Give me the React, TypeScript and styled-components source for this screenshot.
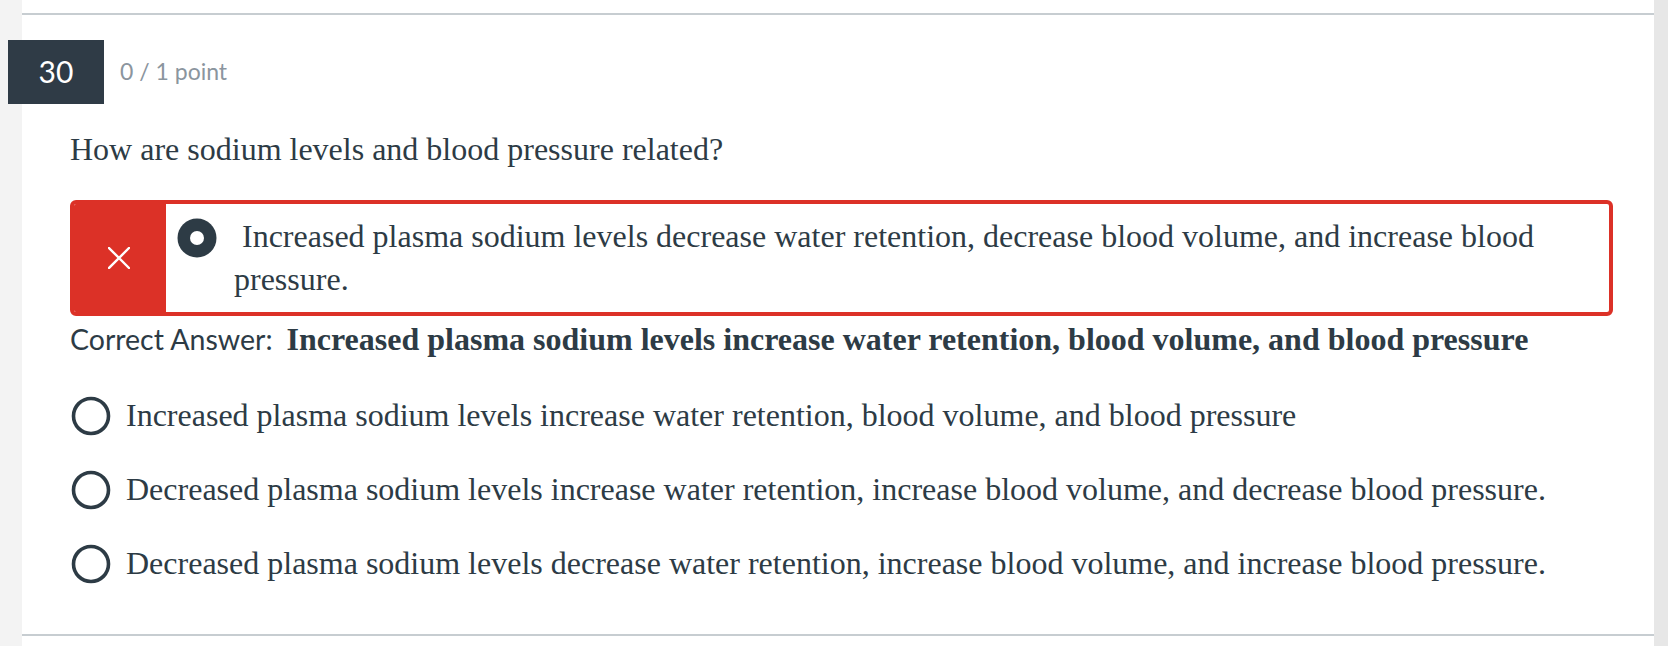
import React from 'react';
import styled, { createGlobalStyle } from 'styled-components';

const GlobalStyle = createGlobalStyle`
  html, body {
    margin: 0;
    padding: 0;
    background: #fff;
  }
  * {
    box-sizing: border-box;
  }
`;

const ink = '#2d3b45';
const red = '#dc3127';

const Page = styled.div`
  display: flex;
  min-height: 100vh;
`;

const Gutter = styled.div<{ $width: number; $bg: string }>`
  flex: 0 0 ${({ $width }) => $width}px;
  background: ${({ $bg }) => $bg};
`;

const Card = styled.div`
  flex: 1;
  background: #fff;
  padding-top: 13px;
  min-width: 0;
`;

const Rule = styled.div<{ $gap?: number }>`
  height: 2px;
  background: #c7cdd1;
  margin-top: ${({ $gap }) => $gap || 0}px;
`;

const Header = styled.div`
  display: flex;
  align-items: center;
  gap: 16px;
  margin: 25px 0 0 -14px;
  position: relative;
`;

const Badge = styled.div`
  width: 96px;
  height: 64px;
  background: #2f3b46;
  color: #fff;
  display: flex;
  align-items: center;
  justify-content: center;
  font-family: Lato, 'Liberation Sans', sans-serif;
  font-size: 30px;
  padding-bottom: 2px;
`;

const Points = styled.span`
  font-family: Lato, 'Liberation Sans', sans-serif;
  font-size: 23px;
  color: #8b959e;
  padding-bottom: 2px;
`;

const Body = styled.div`
  padding: 0 41px 0 48px;
  font-family: 'Liberation Serif', 'Times New Roman', serif;
  font-size: 32px;
  line-height: 43px;
  color: ${ink};
`;

const Question = styled.p`
  margin: 24px 0 29px;
`;

const WrongAnswer = styled.div`
  display: flex;
  border: 4px solid ${red};
  border-radius: 6px;
  overflow: hidden;
`;

const Marker = styled.div`
  flex: 0 0 92px;
  background: ${red};
  display: flex;
  align-items: center;
  justify-content: center;
  padding-right: 2px;
`;

const WrongBody = styled.div`
  flex: 1;
  display: flex;
  align-items: flex-start;
  gap: 17px;
  padding: 11px 12px 11px 11px;
`;

const RadioWrap = styled.span<{ $top?: number }>`
  flex: 0 0 auto;
  display: flex;
  margin-top: ${({ $top }) => $top || 0}px;
`;

const AnswerText = styled.span`
  white-space: pre-wrap;
`;

const CorrectLine = styled.div`
  margin-top: 2px;
  display: flex;
  align-items: baseline;
  gap: 14px;
`;

const CorrectLabel = styled.span`
  font-family: Lato, 'Liberation Sans', sans-serif;
  font-size: 28.5px;
`;

const CorrectText = styled.strong`
  font-weight: 700;
`;

const Options = styled.div`
  display: flex;
  flex-direction: column;
  gap: 31px;
  margin-top: 33px;
`;

const Option = styled.label`
  display: flex;
  align-items: center;
  gap: 15px;
  padding-left: 1px;
`;

const Radio: React.FC<{ checked?: boolean }> = ({ checked }) =>
  checked ? (
    <svg width="40" height="40" viewBox="0 0 40 40">
      <circle cx="20" cy="20" r="19.5" fill={ink} />
      <circle cx="20" cy="20" r="7" fill="#fff" />
    </svg>
  ) : (
    <svg width="40" height="40" viewBox="0 0 40 40">
      <circle cx="20" cy="20" r="17.5" fill="none" stroke={ink} strokeWidth="3.6" />
    </svg>
  );

const Cross = () => (
  <svg width="22" height="22" viewBox="0 0 22 22">
    <path d="M1 1 L21 21 M21 1 L1 21" stroke="#fff" strokeWidth="2.4" strokeLinecap="square" />
  </svg>
);

const options = [
  'Increased plasma sodium levels increase water retention, blood volume, and blood pressure',
  'Decreased plasma sodium levels increase water retention, increase blood volume, and decrease blood pressure.',
  'Decreased plasma sodium levels decrease water retention, increase blood volume, and increase blood pressure.',
];

const App: React.FC = () => {
  return (
    <>
      <GlobalStyle />
      <Page>
        <Gutter $width={22} $bg="#f3f3f3" />
        <Card>
          <Rule />
          <Header>
            <Badge>30</Badge>
            <Points>0 / 1 point</Points>
          </Header>
          <Body>
            <Question>How are sodium levels and blood pressure related?</Question>
            <WrongAnswer>
              <Marker>
                <Cross />
              </Marker>
              <WrongBody>
                <RadioWrap $top={3}>
                  <Radio checked />
                </RadioWrap>
                <AnswerText>
                  {' Increased plasma sodium levels decrease water retention, decrease blood volume, and increase blood pressure.'}
                </AnswerText>
              </WrongBody>
            </WrongAnswer>
            <CorrectLine>
              <CorrectLabel>Correct Answer:</CorrectLabel>
              <CorrectText>{options[0]}</CorrectText>
            </CorrectLine>
            <Options>
              {options.map((o) => (
                <Option key={o}>
                  <Radio />
                  <span>{o}</span>
                </Option>
              ))}
            </Options>
          </Body>
          <Rule $gap={49} />
        </Card>
        <Gutter $width={14} $bg="#e7e7e7" />
      </Page>
    </>
  );
};

export default App;
